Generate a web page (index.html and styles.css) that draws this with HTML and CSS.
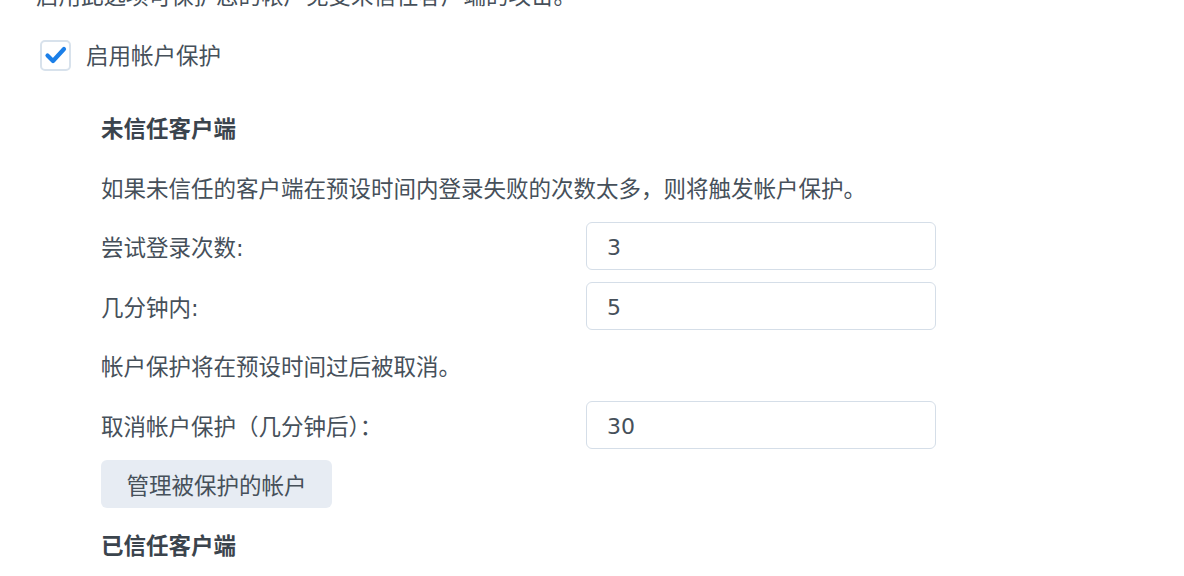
FILE: index.html
```html
<!DOCTYPE html>
<html lang="zh-CN">
<head>
<meta charset="utf-8">
<title>帐户保护</title>
<link rel="stylesheet" href="styles.css">
</head>
<body>
<div class="page">
  <p class="intro">启用此选项可保护您的帐户免受未信任客户端的攻击。</p>
  <label class="check-row">
    <span class="checkbox">
      <svg viewBox="0 0 30 30" width="30" height="30"><polyline points="6.5,15.5 12,21 23,9" fill="none" stroke="#1b7fe8" stroke-width="4.2" stroke-linecap="round" stroke-linejoin="round"/></svg>
    </span>
    <span class="check-label">启用帐户保护</span>
  </label>
  <div class="section">
    <div class="item heading">未信任客户端</div>
    <div class="item text">如果未信任的客户端在预设时间内登录失败的次数太多，则将触发帐户保护。</div>
    <div class="item field">
      <span class="field-label">尝试登录次数:</span>
      <input class="field-input" type="text" value="3">
    </div>
    <div class="item field">
      <span class="field-label">几分钟内:</span>
      <input class="field-input" type="text" value="5">
    </div>
    <div class="item text">帐户保护将在预设时间过后被取消。</div>
    <div class="item field">
      <span class="field-label">取消帐户保护（几分钟后）：</span>
      <input class="field-input" type="text" value="30">
    </div>
    <div class="item"><button class="btn" type="button">管理被保护的帐户</button></div>
    <div class="item heading">已信任客户端</div>
  </div>
</div>
</body>
</html>
```
FILE: styles.css
```css
html, body {
  margin: 0;
  padding: 0;
  background: #ffffff;
  overflow: hidden;
}
body {
  font-family: "DejaVu Sans", "Noto Sans CJK SC", sans-serif;
  font-size: 22.5px;
  color: #46505a;
}
.page {
  padding-left: 36px;
}
.intro {
  margin: -19px 0 0 0;
  line-height: 30px;
  white-space: nowrap;
}
.check-row {
  display: flex;
  align-items: center;
  gap: 15px;
  margin-top: 28px;
  margin-left: 4px;
  height: 32px;
}
.checkbox {
  width: 31px;
  height: 31px;
  box-sizing: border-box;
  border: 2px solid #d8e2ec;
  border-radius: 5px;
  display: flex;
  align-items: center;
  justify-content: center;
  background: #fff;
}
.checkbox svg {
  flex: none;
}
.check-label {
  line-height: 30px;
  margin-top: 1px;
}
.section {
  display: flex;
  flex-direction: column;
  gap: 11.5px;
  margin-top: 32px;
  padding-left: 65px;
}
.item {
  height: 48px;
  display: flex;
  align-items: center;
  white-space: nowrap;
}
.heading {
  font-weight: bold;
  color: #3b444d;
}
.field-label {
  width: 485px;
  flex: none;
}
.field-input {
  width: 350px;
  height: 48px;
  box-sizing: border-box;
  border: 1px solid #d5dee8;
  border-radius: 6px;
  padding: 3px 20px 0 20px;
  font-family: "DejaVu Sans", "Noto Sans CJK SC", sans-serif;
  font-size: 22px;
  color: #46505a;
  background: #fff;
  outline: none;
}
.btn {
  height: 48px;
  padding: 0 25.5px;
  border: none;
  border-radius: 6px;
  background: #e7ecf3;
  font-family: "DejaVu Sans", "Noto Sans CJK SC", sans-serif;
  font-size: 22.5px;
  color: #46505a;
}
```
